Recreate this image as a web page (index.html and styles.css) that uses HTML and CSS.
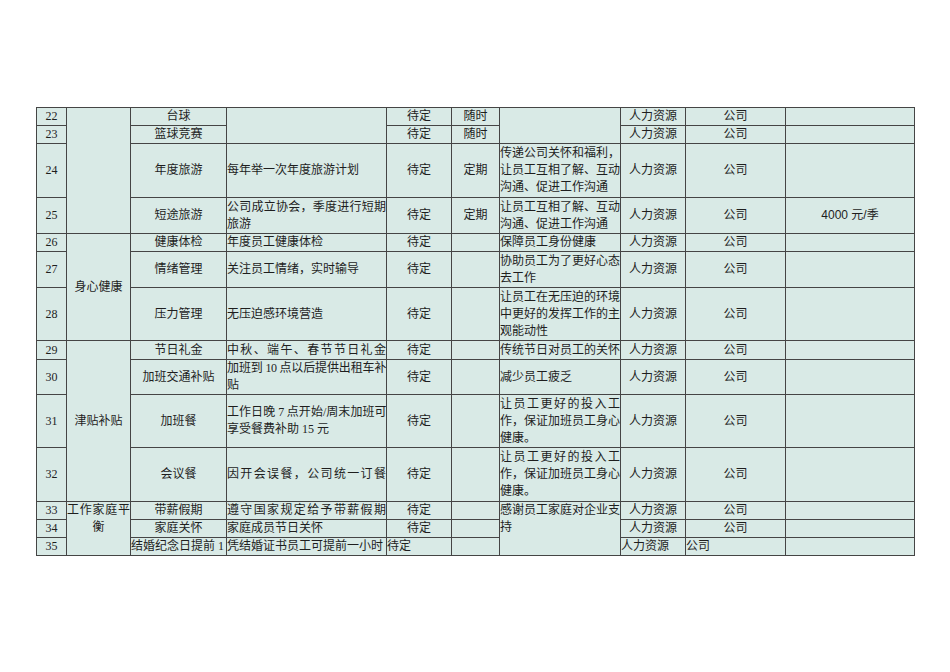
FILE: index.html
```html
<!DOCTYPE html>
<html lang="zh-CN">
<head>
<meta charset="utf-8">
<title>员工福利表</title>
<link rel="stylesheet" href="styles.css">
</head>
<body>
<div class="page">
<table class="sheet">
<colgroup>
<col class="c1"><col class="c2"><col class="c3"><col class="c4"><col class="c5"><col class="c6"><col class="c7"><col class="c8"><col class="c9"><col class="c10">
</colgroup>
<tbody>
<tr class="h18">
<td class="num">22</td><td rowspan="4"></td><td class="ctr">台球</td><td rowspan="2"></td><td class="ctr">待定</td><td class="ctr">随时</td><td rowspan="2"></td><td class="ctr">人力资源</td><td class="ctr">公司</td><td></td>
</tr>
<tr class="h18">
<td class="num">23</td><td class="ctr">篮球竞赛</td><td class="ctr">待定</td><td class="ctr">随时</td><td class="ctr">人力资源</td><td class="ctr">公司</td><td></td>
</tr>
<tr class="h54">
<td class="num">24</td><td class="ctr">年度旅游</td><td class="txt">每年举一次年度旅游计划</td><td class="ctr">待定</td><td class="ctr">定期</td>
<td class="txt"><span class="jl">传递公司关怀和福利，</span><span class="jl">让员工互相了解、互动</span><span class="ll">沟通、促进工作沟通</span></td>
<td class="ctr">人力资源</td><td class="ctr">公司</td><td></td>
</tr>
<tr class="h36">
<td class="num">25</td><td class="ctr">短途旅游</td>
<td class="txt"><span class="jl">公司成立协会，季度进行短期</span><span class="ll">旅游</span></td>
<td class="ctr">待定</td><td class="ctr">定期</td>
<td class="txt"><span class="jl">让员工互相了解、互动</span><span class="ll">沟通、促进工作沟通</span></td>
<td class="ctr">人力资源</td><td class="ctr">公司</td><td class="ctr amount">4000 元/季</td>
</tr>
<tr class="h18">
<td class="num">26</td><td rowspan="3" class="ctr">身心健康</td><td class="ctr">健康体检</td><td class="txt">年度员工健康体检</td><td class="ctr">待定</td><td></td><td class="txt">保障员工身份健康</td><td class="ctr">人力资源</td><td class="ctr">公司</td><td></td>
</tr>
<tr class="h36">
<td class="num">27</td><td class="ctr">情绪管理</td><td class="txt">关注员工情绪，实时输导</td><td class="ctr">待定</td><td></td>
<td class="txt"><span class="jl">协助员工为了更好心态</span><span class="ll">去工作</span></td>
<td class="ctr">人力资源</td><td class="ctr">公司</td><td></td>
</tr>
<tr class="h53">
<td class="num">28</td><td class="ctr">压力管理</td><td class="txt">无压迫感环境营造</td><td class="ctr">待定</td><td></td>
<td class="txt"><span class="jl">让员工在无压迫的环境</span><span class="jl">中更好的发挥工作的主</span><span class="ll">观能动性</span></td>
<td class="ctr">人力资源</td><td class="ctr">公司</td><td></td>
</tr>
<tr class="h19">
<td class="num">29</td><td rowspan="4" class="ctr">津贴补贴</td><td class="ctr">节日礼金</td><td class="txt"><span class="jl">中秋、端午、春节节日礼金</span></td><td class="ctr">待定</td><td></td><td class="txt">传统节日对员工的关怀</td><td class="ctr">人力资源</td><td class="ctr">公司</td><td></td>
</tr>
<tr class="h35">
<td class="num">30</td><td class="ctr">加班交通补贴</td>
<td class="txt"><span class="jl tight">加班到 10 点以后提供出租车补</span><span class="ll">贴</span></td>
<td class="ctr">待定</td><td></td><td class="txt">减少员工疲乏</td><td class="ctr">人力资源</td><td class="ctr">公司</td><td></td>
</tr>
<tr class="h53">
<td class="num">31</td><td class="ctr">加班餐</td>
<td class="txt"><span class="jl tight">工作日晚 7 点开始/周末加班可</span><span class="ll">享受餐费补助 15 元</span></td>
<td class="ctr">待定</td><td></td>
<td class="txt"><span class="jl">让员工更好的投入工</span><span class="jl">作，保证加班员工身心</span><span class="ll">健康。</span></td>
<td class="ctr">人力资源</td><td class="ctr">公司</td><td></td>
</tr>
<tr class="h54">
<td class="num">32</td><td class="ctr">会议餐</td><td class="txt"><span class="jl">因开会误餐，公司统一订餐</span></td><td class="ctr">待定</td><td></td>
<td class="txt"><span class="jl">让员工更好的投入工</span><span class="jl">作，保证加班员工身心</span><span class="ll">健康。</span></td>
<td class="ctr">人力资源</td><td class="ctr">公司</td><td></td>
</tr>
<tr class="h18">
<td class="num">33</td><td rowspan="3" class="ctr top"><span class="jl">工作家庭平</span><span class="ll mid">衡</span></td><td class="ctr">带薪假期</td><td class="txt"><span class="jl">遵守国家规定给予带薪假期</span></td><td class="ctr">待定</td><td></td>
<td rowspan="3" class="txt top"><span class="jl">感谢员工家庭对企业支</span><span class="ll">持</span></td>
<td class="ctr">人力资源</td><td class="ctr">公司</td><td></td>
</tr>
<tr class="h18">
<td class="num">34</td><td class="ctr">家庭关怀</td><td class="txt">家庭成员节日关怀</td><td class="ctr">待定</td><td></td><td class="ctr">人力资源</td><td class="ctr">公司</td><td></td>
</tr>
<tr class="h18">
<td class="num">35</td><td class="txt clip">结婚纪念日提前 1</td><td class="txt clip">凭结婚证书员工可提前一小时</td><td class="txt">待定</td><td></td><td class="txt">人力资源</td><td class="txt">公司</td><td></td>
</tr>
</tbody>
</table>
</div>
</body>
</html>
```

FILE: styles.css
```css
html, body {
  margin: 0;
  padding: 0;
  background: #ffffff;
}

.page {
  padding: 107px 0 0 36px;
}

.sheet {
  border-collapse: collapse;
  table-layout: fixed;
  width: 878px;
  font-family: "Liberation Serif", "Noto Sans CJK SC", serif;
  font-size: 12px;
  line-height: 17px;
  color: #1e1e1e;
  background: #d9eae6;
}

.c1 { width: 30px; }
.c2 { width: 64px; }
.c3 { width: 96px; }
.c4 { width: 160px; }
.c5 { width: 65px; }
.c6 { width: 48px; }
.c7 { width: 121px; }
.c8 { width: 65px; }
.c9 { width: 100px; }
.c10 { width: 129px; }

.sheet td {
  border: 1px solid #454545;
  padding: 0;
  vertical-align: middle;
  overflow: hidden;
}

.h18 { height: 18px; }
.h19 { height: 19px; }
.h35 { height: 35px; }
.h36 { height: 36px; }
.h53 { height: 53px; }
.h54 { height: 54px; }

.num, .ctr {
  text-align: center;
}

.txt {
  text-align: left;
}

.top {
  vertical-align: top !important;
}

.clip {
  white-space: nowrap;
}

.jl {
  display: block;
  text-align: justify;
  text-align-last: justify;
  white-space: nowrap;
}

.tight {
  letter-spacing: -0.5px;
}

.ll {
  display: block;
  white-space: nowrap;
}

.mid {
  text-align: center;
}

.amount {
  font-family: "Liberation Sans", "Noto Sans CJK SC", sans-serif;
}
```
